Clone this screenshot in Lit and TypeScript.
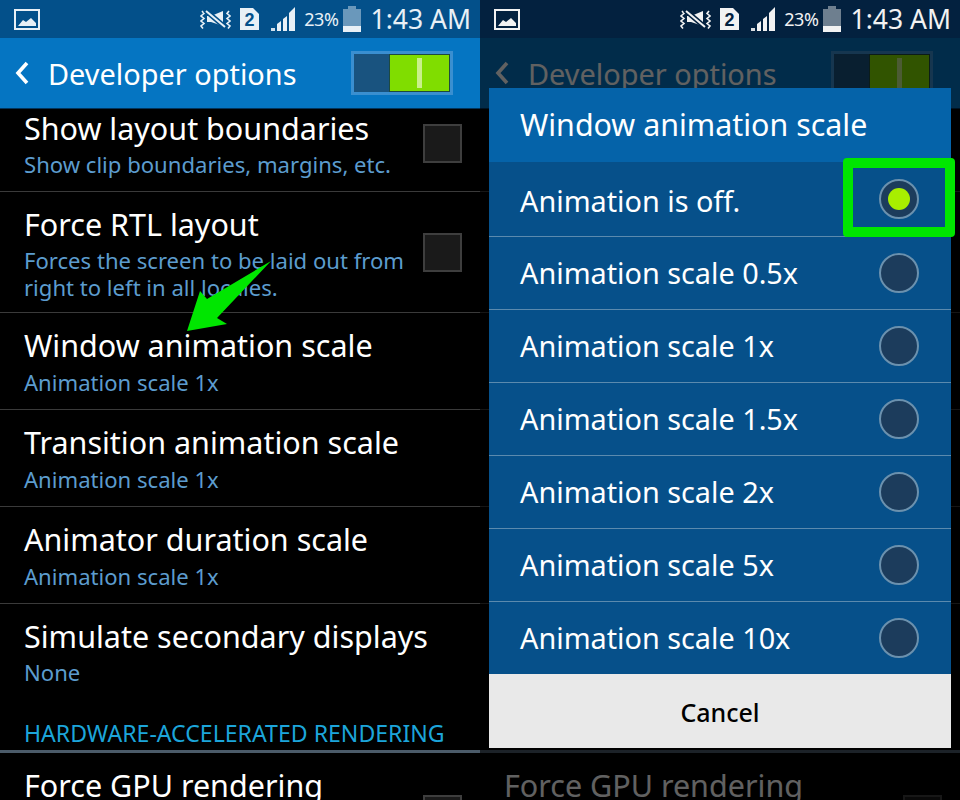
import { LitElement, html, css, svg } from "lit";
import { customElement, property } from "lit/decorators.js";

const FONT = css`"Noto Sans", "Open Sans", sans-serif`;

@customElement("status-bar")
class StatusBar extends LitElement {
  static styles = css`
    :host { --sb: #03508a; display: flex; align-items: center; height: 38px; padding: 0 9px 0 14px; box-sizing: border-box; background: var(--sb); color: #e8f0f6; font-family: ${FONT}; }
    :host([dim]) { --sb: #03213f; color: #f2f2f2; }
    svg { display: block; flex: none; }
    .gap { flex: 1; }
    .pct { font-size: 18px; margin-left: 9px; letter-spacing: -0.4px; }
    .time { font-size: 26.5px; margin-left: 10px; }
    .sim { margin-left: 9px; }
    .sig { margin-left: 12px; }
    .bat { margin-left: 4px; }
    .cut { stroke: var(--sb); }
    .num { fill: var(--sb); }
  `;
  render() {
    return html`
      <svg width="26" height="21" viewBox="0 0 26 21">
        <rect x="1" y="1" width="24" height="19" fill="none" stroke="currentColor" stroke-width="2"/>
        <path d="M4 17 L9 11 L12 13 L17 9 L22 14 L22 17 Z" fill="currentColor"/>
      </svg>
      <div class="gap"></div>
      <svg width="31" height="22" viewBox="0 0 31 22" fill="none" stroke="currentColor">
        <path d="M2 3 L4 5.5 L1 8 L4 10.5 L1 13 L4 15.5 L1 18 L3 20.5" stroke-width="1.6"/>
        <path d="M29 3 L27 5.5 L30 8 L27 10.5 L30 13 L27 15.5 L30 18 L28 20.5" stroke-width="1.6"/>
        <path d="M7 8 H11 L23 3 V18 L11 14 H7 Z" fill="currentColor" stroke="none"/>
        <path class="cut" d="M5 2 L26 20" stroke-width="5"/>
        <path d="M6 3 L25 19" stroke-width="2"/>
      </svg>
      <svg class="sim" width="19" height="22" viewBox="0 0 19 22">
        <path d="M0 0 H13 L19 6 V22 H0 Z" fill="currentColor"/>
        <text class="num" x="9.5" y="18" text-anchor="middle" font-size="18" font-weight="700" font-family="Liberation Sans, sans-serif">2</text>
      </svg>
      <svg class="sig" width="24" height="24" viewBox="0 0 24 24" fill="currentColor">
        <rect x="0" y="21" width="4" height="3" opacity=".9"/>
        <path d="M6 24 V17 L10 14 V24 Z"/>
        <path d="M12 24 V12 L16 9 V24 Z"/>
        <path d="M18 24 V6 L24 0 V24 Z"/>
      </svg>
      <span class="pct">23%</span>
      <svg class="bat" width="18" height="26" viewBox="0 0 18 26">
        <rect x="5" y="0" width="8" height="3" fill="currentColor" opacity=".45"/>
        <rect x="0" y="3" width="18" height="17" fill="currentColor" opacity=".45"/>
        <rect x="0" y="20" width="18" height="6" fill="currentColor"/>
      </svg>
      <span class="time">1:43 AM</span>
    `;
  }
}

@customElement("app-bar")
class AppBar extends LitElement {
  static styles = css`
    :host { display: flex; align-items: center; height: 71px; padding: 0 27px 0 15px; box-sizing: border-box; background: #0575c2; border-bottom: 1px solid #02345c; color: #fff; font-family: ${FONT}; }
    svg { display: block; flex: none; }
    .title { font-size: 28.9px; margin: 2px 0 0 19px; flex: 1; line-height: 34px; }
    .sw { display: flex; width: 102px; height: 44px; box-sizing: border-box; border: 3px solid #3a8fd0; background: #19537f; }
    .off { display: block; width: 35px; }
    .on { flex: 1; background: #80dd00; display: flex; align-items: center; justify-content: center; border: 1px solid #1d4a40; }
    .knob { display: block; width: 5px; height: 30px; background: #c9f08a; }
  `;
  render() {
    return html`
      <svg width="14" height="24" viewBox="0 0 14 24" fill="none" stroke="currentColor" stroke-width="3.6"><path d="M12 2 L3 12 L12 22"/></svg>
      <span class="title">Developer options</span>
      <div class="sw"><span class="off"></span><span class="on"><span class="knob"></span></span></div>
    `;
  }
}

interface Row { t: string; s?: string[]; check?: boolean; }

const ROWS: Row[] = [
  { t: "Show layout boundaries", s: ["Show clip boundaries, margins, etc."], check: true },
  { t: "Force RTL layout", s: ["Forces the screen to be laid out from", "right to left in all locales."], check: true },
  { t: "Window animation scale", s: ["Animation scale 1x"] },
  { t: "Transition animation scale", s: ["Animation scale 1x"] },
  { t: "Animator duration scale", s: ["Animation scale 1x"] },
  { t: "Simulate secondary displays", s: ["None"] },
];

@customElement("settings-list")
class SettingsList extends LitElement {
  static styles = css`
    :host { display: block; height: 691px; overflow: hidden; background: #000; font-family: ${FONT}; }
    .inner { margin-top: -13px; }
    .row { display: flex; align-items: center; padding: 12px 18px 13px 24px; border-bottom: 1px solid #3a3a3a; }
    .two { padding-bottom: 11px; }
    .last { border-bottom: 0; height: 112px; box-sizing: border-box; align-items: flex-start; }
    .col { flex: 1; min-width: 0; }
    .t { font-size: 30.5px; line-height: 40px; color: #fff; white-space: nowrap; }
    .s { font-size: 22.1px; line-height: 27px; color: #5c9cce; margin-top: 4px; white-space: nowrap; }
    .checked .t + .s, .last .t + .s { margin-top: 3px; }
    .s + .s { margin-top: 0; }
    .box { width: 39px; height: 39px; box-sizing: border-box; border: 2px solid #3e3e3e; background: #1a1a1a; flex: none; }
    .head { font-size: 23.1px; line-height: 34px; height: 34px; color: #1ca5da; padding: 0 24px; white-space: nowrap; }
    .rule { height: 3px; background: #4b5b69; }
    .gpu { align-items: flex-start; }
    .gpu .box { margin-top: 30px; }
  `;
  render() {
    return html`<div class="inner">
      ${ROWS.map((r, i) => html`
        <div class="row ${r.check ? "checked" : ""} ${(r.s?.length ?? 0) > 1 ? "two" : ""} ${i === ROWS.length - 1 ? "last" : ""}">
          <div class="col">
            <div class="t">${r.t}</div>
            ${(r.s ?? []).map((x) => html`<div class="s">${x}</div>`)}
          </div>
          ${r.check ? html`<div class="box"></div>` : ""}
        </div>`)}
      <div class="head">HARDWARE-ACCELERATED RENDERING</div>
      <div class="rule"></div>
      <div class="row gpu"><div class="col"><div class="t">Force GPU rendering</div></div><div class="box"></div></div>
    </div>`;
  }
}

const SCALES = ["Animation is off.", "Animation scale 0.5x", "Animation scale 1x", "Animation scale 1.5x", "Animation scale 2x", "Animation scale 5x", "Animation scale 10x"];

@customElement("scale-dialog")
class ScaleDialog extends LitElement {
  static styles = css`
    :host { display: block; position: absolute; left: 9px; top: 88px; width: 462px; font-family: ${FONT}; }
    .title { height: 74px; box-sizing: border-box; padding: 0 31px; background: #0563a9; color: #fff; font-size: 30.4px; line-height: 73px; white-space: nowrap; }
    .opt { display: flex; align-items: center; justify-content: space-between; height: 73px; box-sizing: border-box; padding: 0 32px 1px 31px; background: #06508a; border-top: 1px solid #5b8aae; color: #fff; font-size: 28.8px; }
    .title + .opt { border-top: 0; height: 74px; }
    .title + .opt .label { margin-top: 3px; }
    .radio { width: 40px; height: 40px; box-sizing: border-box; border-radius: 50%; border: 2px solid #6b91ae; background: #1c3c5c; display: flex; align-items: center; justify-content: center; }
    .dot { width: 22px; height: 22px; border-radius: 50%; background: #a8ee00; }
    .cancel { height: 74px; background: #e9e9e9; color: #000; font-size: 25px; font-weight: 500; text-align: center; line-height: 76px; }
    .mark { position: absolute; left: 354px; top: 70px; width: 112px; height: 79px; box-sizing: border-box; border: 10px solid #00e600; border-radius: 4px; }
  `;
  render() {
    return html`
      <div class="title">Window animation scale</div>
      ${SCALES.map((s, i) => html`<div class="opt"><span class="label">${s}</span><span class="radio">${i === 0 ? html`<span class="dot"></span>` : ""}</span></div>`)}
      <div class="cancel">Cancel</div>
      <div class="mark"></div>
    `;
  }
}

@customElement("phone-pane")
class PhonePane extends LitElement {
  @property({ type: Boolean }) dim = false;
  static styles = css`
    :host { display: block; position: relative; width: 480px; height: 800px; overflow: hidden; background: #000; }
    .shade { position: absolute; left: 0; right: 0; top: 38px; bottom: 0; background: rgba(0, 0, 0, 0.62); }
    .arrow { position: absolute; left: 0; top: 0; pointer-events: none; }
  `;
  render() {
    return html`
      <status-bar ?dim=${this.dim}></status-bar>
      <app-bar></app-bar>
      <settings-list></settings-list>
      ${this.dim
        ? html`<div class="shade"></div><scale-dialog></scale-dialog>`
        : html`<svg class="arrow" width="480" height="800" viewBox="0 0 480 800">${svg`<path d="M271 261 L217 318 L227 324 L187 331 L200 291 L207 299 Z" fill="#00e600"/>`}</svg>`}
    `;
  }
}

@customElement("app-root")
class AppRoot extends LitElement {
  static styles = css`
    :host { display: flex; width: 960px; height: 800px; background: #000; }
  `;
  render() {
    return html`<phone-pane></phone-pane><phone-pane dim></phone-pane>`;
  }
}
